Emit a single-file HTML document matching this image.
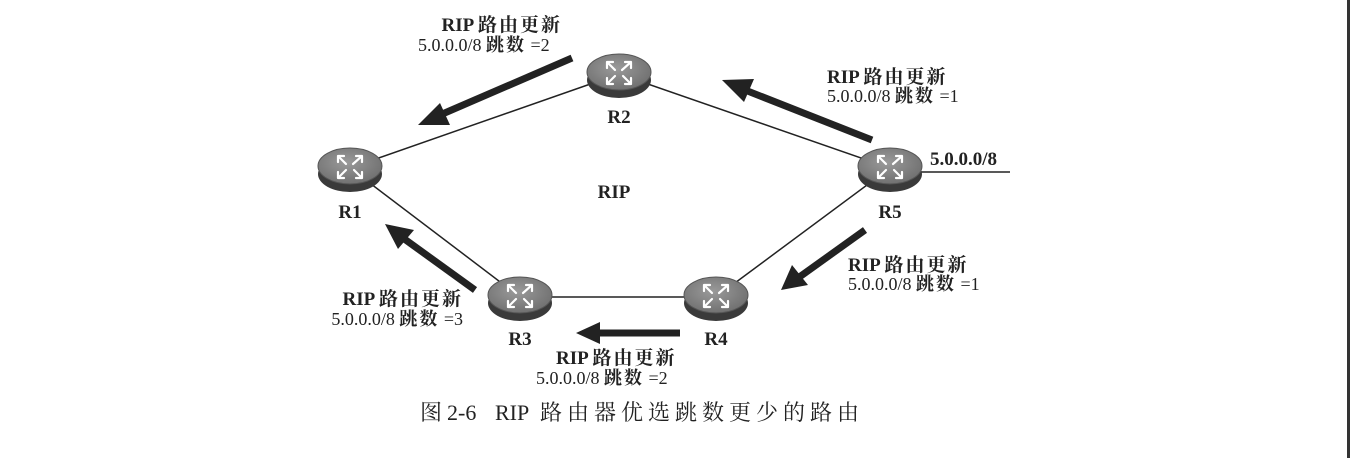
<!DOCTYPE html>
<html><head><meta charset="utf-8"><style>
body{margin:0;background:#fff;}
svg{display:block}
text{font-family:"Liberation Serif","Noto Serif CJK SC",serif;fill:#222}
.b{font-weight:bold;font-size:19px}
.n{font-size:18px}
.c{letter-spacing:2px}
</style></head><body>
<svg width="1350" height="458" viewBox="0 0 1350 458">
<defs>
<radialGradient id="g" cx="0.45" cy="0.4" r="0.7">
<stop offset="0" stop-color="#9a9a9a"/><stop offset="1" stop-color="#6a6a6a"/></radialGradient>
<g id="r">
<ellipse cx="0" cy="6" rx="32" ry="18" fill="#3a3a3a"/>
<ellipse cx="0" cy="-2" rx="32" ry="18" fill="url(#g)" stroke="#555" stroke-width="1"/>
<g stroke="#fff" stroke-width="2.2" fill="none" stroke-linecap="round">
<path d="M-12,-12 L-4,-4 M-12,-12 L-12,-6 M-12,-12 L-6,-12"/>
<path d="M3,-4 L12,-12 M12,-12 L6,-12 M12,-12 L12,-6"/>
<path d="M-4,2 L-12,10 M-12,10 L-6,10 M-12,10 L-12,4"/>
<path d="M4,2 L12,10 M12,10 L6,10 M12,10 L12,4"/>
</g>
</g>
</defs>
<rect x="1347" y="0" width="3" height="458" fill="#333"/>
<g stroke="#222" stroke-width="1.5">
<line x1="350" y1="168" x2="619" y2="74"/>
<line x1="619" y1="74" x2="890" y2="168"/>
<line x1="350" y1="168" x2="520" y2="297"/>
<line x1="890" y1="168" x2="716" y2="297"/>
<line x1="520" y1="297" x2="716" y2="297"/>
<line x1="890" y1="172" x2="1010" y2="172"/>
</g>
<g fill="#222">
<line x1="572" y1="58" x2="440" y2="115" stroke="#222" stroke-width="7"/>
<polygon points="418,125 440,103 450,125"/>
<line x1="872" y1="140" x2="745" y2="90" stroke="#222" stroke-width="7"/>
<polygon points="722,80 754,79 744,102"/>
<line x1="865" y1="230" x2="798" y2="278" stroke="#222" stroke-width="7"/>
<polygon points="781,290 792,265 808,285"/>
<line x1="680" y1="333" x2="598" y2="333" stroke="#222" stroke-width="7"/>
<polygon points="576,333 600,322 600,344"/>
<line x1="475" y1="290" x2="403" y2="238" stroke="#222" stroke-width="7"/>
<polygon points="385,224 414,230 398,249"/>
</g>
<use href="#r" x="350" y="168"/>
<use href="#r" x="619" y="74"/>
<use href="#r" x="890" y="168"/>
<use href="#r" x="520" y="297"/>
<use href="#r" x="716" y="297"/>
<g text-anchor="middle">
<text x="350" y="218" class="b">R1</text>
<text x="619" y="123" class="b">R2</text>
<text x="890" y="218" class="b">R5</text>
<text x="520" y="345" class="b">R3</text>
<text x="716" y="345" class="b">R4</text>
<text x="614" y="198" class="b">RIP</text>
</g>
<text x="930" y="165" class="b">5.0.0.0/8</text>
<text x="562" y="31" class="b" text-anchor="end">RIP <tspan class="c">路由更新</tspan></text>
<text x="418" y="51" class="n">5.0.0.0/8 <tspan font-weight="bold" class="c">跳数</tspan> =2</text>
<text x="827" y="83" class="b">RIP <tspan class="c">路由更新</tspan></text>
<text x="827" y="102" class="n">5.0.0.0/8 <tspan font-weight="bold" class="c">跳数</tspan> =1</text>
<text x="848" y="271" class="b">RIP <tspan class="c">路由更新</tspan></text>
<text x="848" y="290" class="n">5.0.0.0/8 <tspan font-weight="bold" class="c">跳数</tspan> =1</text>
<text x="463" y="305" class="b" text-anchor="end">RIP <tspan class="c">路由更新</tspan></text>
<text x="463" y="325" class="n" text-anchor="end">5.0.0.0/8 <tspan font-weight="bold" class="c">跳数</tspan> =3</text>
<text x="556" y="364" class="b">RIP <tspan class="c">路由更新</tspan></text>
<text x="536" y="384" class="n">5.0.0.0/8 <tspan font-weight="bold" class="c">跳数</tspan> =2</text>
<text y="420" font-size="22"><tspan x="420">图</tspan><tspan x="447">2-6</tspan><tspan x="495">RIP</tspan><tspan x="540" letter-spacing="5">路由器优选跳数更少的路由</tspan></text>
</svg>
</body></html>
